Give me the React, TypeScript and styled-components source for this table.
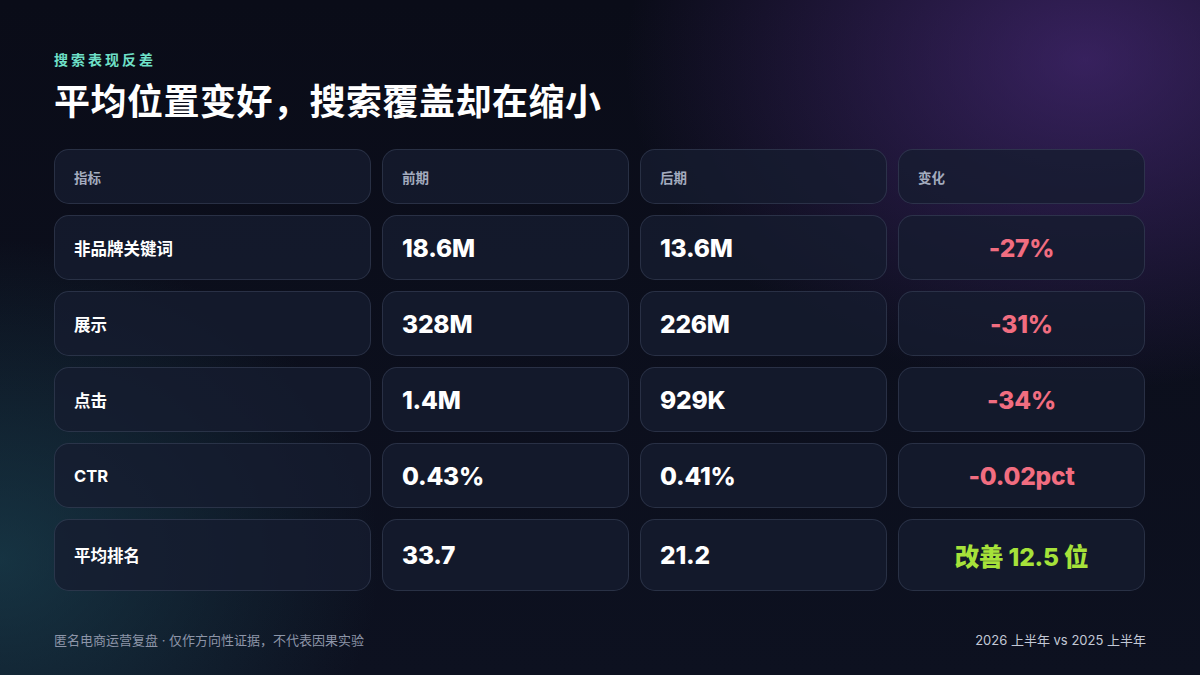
import React from "react";
import styled, { createGlobalStyle } from "styled-components";

const Global = createGlobalStyle`
  html, body { margin: 0; padding: 0; background: #0b0d1a; }
  #root { width: 1200px; height: 675px; }
`;

const Page = styled.div`
  width: 1200px;
  height: 675px;
  box-sizing: border-box;
  padding: 50px 54px 26px;
  display: flex;
  flex-direction: column;
  font-family: Inter, "Noto Sans CJK SC", sans-serif;
  color: #fff;
  background:
    radial-gradient(ellipse 460px 330px at 1085px 60px, rgba(92, 50, 150, 0.55), rgba(92, 50, 150, 0) 100%),
    radial-gradient(ellipse 380px 320px at 0px 560px, rgba(30, 80, 95, 0.55), rgba(30, 80, 95, 0) 100%),
    linear-gradient(180deg, #0a0c18 0%, #0d1120 100%);
  overflow: hidden;
`;

const Eyebrow = styled.div`
  font-family: "Noto Sans CJK SC", sans-serif;
  font-size: 14px;
  font-weight: 700;
  letter-spacing: 3px;
  color: #6fe0c8;
  line-height: 18px;
`;

const Title = styled.h1`
  margin: 8px 0 0;
  font-family: "Noto Sans CJK SC", sans-serif;
  font-size: 36px;
  line-height: 46px;
  font-weight: 700;
  letter-spacing: 0.5px;
  color: #ffffff;
`;

const Table = styled.div`
  margin-top: 27px;
  display: grid;
  grid-template-columns: 317px 247px 247px 247px;
  grid-template-rows: 55px 65px 65px 65px 65px 72px;
  gap: 11px;
`;

const Cell = styled.div<{ $center?: boolean }>`
  box-sizing: border-box;
  display: flex;
  align-items: center;
  justify-content: ${(p) => (p.$center ? "center" : "flex-start")};
  padding: 0 19px;
  border-radius: 15px;
  border: 1px solid rgba(150, 165, 200, 0.17);
  background: rgba(22, 28, 48, 0.78);
`;

const HeadText = styled.span`
  font-family: "Noto Sans CJK SC", sans-serif;
  font-size: 13.5px;
  font-weight: 700;
  color: #a3abbe;
`;

const Label = styled.span`
  font-family: Inter, "Noto Sans CJK SC", sans-serif;
  font-size: 16.5px;
  font-weight: 700;
  color: #ffffff;
`;

const Num = styled.span`
  font-family: Inter, "Noto Sans CJK SC", sans-serif;
  font-size: 24.5px;
  font-weight: 800;
  color: #ffffff;
  letter-spacing: -0.2px;
`;

const Delta = styled.span<{ $good?: boolean }>`
  font-family: Inter, "Noto Sans CJK SC", sans-serif;
  font-size: 24.5px;
  font-weight: 800;
  letter-spacing: -0.2px;
  color: ${(p) => (p.$good ? "#a6e23a" : "#f16d80")};
`;

const Footer = styled.div`
  margin-top: auto;
  display: flex;
  justify-content: space-between;
  align-items: center;
  font-family: Inter, "Noto Sans CJK SC", sans-serif;
  font-size: 13px;
  line-height: 18px;
`;

const FootLeft = styled.span`
  color: #8d95a8;
`;

const FootRight = styled.span`
  color: #c3c9d6;
`;

const rows = [
  { label: "非品牌关键词", a: "18.6M", b: "13.6M", d: "-27%", good: false },
  { label: "展示", a: "328M", b: "226M", d: "-31%", good: false },
  { label: "点击", a: "1.4M", b: "929K", d: "-34%", good: false },
  { label: "CTR", a: "0.43%", b: "0.41%", d: "-0.02pct", good: false },
  { label: "平均排名", a: "33.7", b: "21.2", d: "改善 12.5 位", good: true },
];

export default function App() {
  return (
    <>
      <Global />
      <Page>
        <Eyebrow>搜索表现反差</Eyebrow>
        <Title>平均位置变好，搜索覆盖却在缩小</Title>
        <Table>
          {["指标", "前期", "后期", "变化"].map((h) => (
            <Cell key={h}>
              <HeadText>{h}</HeadText>
            </Cell>
          ))}
          {rows.map((r) => (
            <React.Fragment key={r.label}>
              <Cell>
                <Label>{r.label}</Label>
              </Cell>
              <Cell>
                <Num>{r.a}</Num>
              </Cell>
              <Cell>
                <Num>{r.b}</Num>
              </Cell>
              <Cell $center>
                <Delta $good={r.good}>{r.d}</Delta>
              </Cell>
            </React.Fragment>
          ))}
        </Table>
        <Footer>
          <FootLeft>匿名电商运营复盘 · 仅作方向性证据，不代表因果实验</FootLeft>
          <FootRight>2026 上半年 vs 2025 上半年</FootRight>
        </Footer>
      </Page>
    </>
  );
}
